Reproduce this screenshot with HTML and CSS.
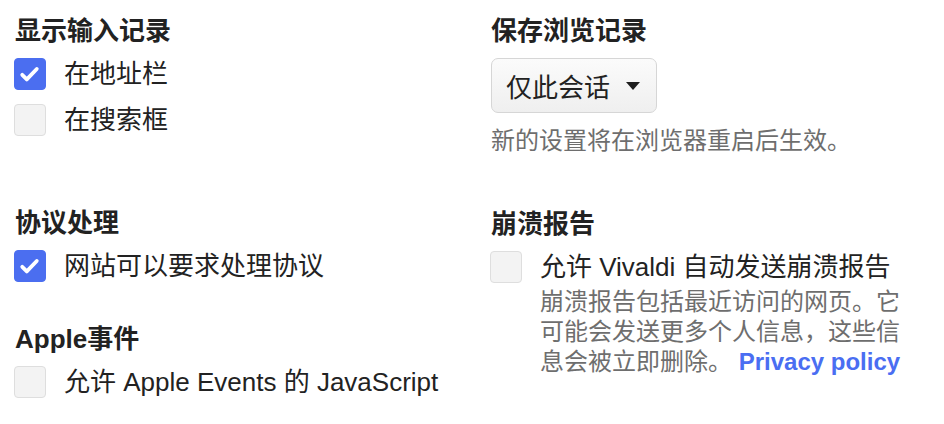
FILE: index.html
```html
<!DOCTYPE html>
<html lang="zh-CN">
<head>
<meta charset="utf-8">
<link rel="stylesheet" href="styles.css">
</head>
<body>
<div class="page">
  <div class="col">
    <section class="group">
      <h2 class="title">显示输入记录</h2>
      <label class="row"><span class="box checked"><svg viewBox="0 0 32 32"><path d="M8 17.5 L13 22.5 L24 11" /></svg></span><span class="text">在地址栏</span></label>
      <label class="row"><span class="box"></span><span class="text">在搜索框</span></label>
    </section>
    <section class="group g2">
      <h2 class="title">协议处理</h2>
      <label class="row"><span class="box checked"><svg viewBox="0 0 32 32"><path d="M8 17.5 L13 22.5 L24 11" /></svg></span><span class="text">网站可以要求处理协议</span></label>
    </section>
    <section class="group g3">
      <h2 class="title">Apple事件</h2>
      <label class="row"><span class="box"></span><span class="text">允许 Apple Events 的 JavaScript</span></label>
    </section>
  </div>
  <div class="col">
    <section class="group">
      <h2 class="title">保存浏览记录</h2>
      <div class="select"><span>仅此会话</span><span class="caret"></span></div>
      <p class="hint">新的设置将在浏览器重启后生效。</p>
    </section>
    <section class="group g2r">
      <h2 class="title">崩溃报告</h2>
      <div class="row top">
        <span class="box"></span>
        <div class="stack">
          <span class="text">允许 Vivaldi 自动发送崩溃报告</span>
          <p class="desc">崩溃报告包括最近访问的网页。它可能会发送更多个人信息，这些信息会被立即删除。 <a class="link" href="#">Privacy policy</a></p>
        </div>
      </div>
    </section>
  </div>
</div>
</body>
</html>
```
FILE: styles.css
```css
html, body {
  margin: 0;
  padding: 0;
  background: #ffffff;
}
body {
  font-family: "Liberation Sans", "Noto Sans CJK SC", sans-serif;
  color: #222222;
}
.page {
  display: grid;
  grid-template-columns: 476px 1fr;
  padding: 15px 0 0 14px;
}
.col {
  display: flex;
  flex-direction: column;
}
.group {
  display: flex;
  flex-direction: column;
}
.title {
  margin: 0 0 11px 1px;
  font-size: 26px;
  line-height: 32px;
  font-weight: bold;
  color: #222222;
}
.g2 { margin-top: 57px; }
.g3 { margin-top: 27px; }
.g2r { margin-top: 52px; }
.row {
  display: flex;
  align-items: center;
  gap: 18px;
  height: 32px;
  margin-bottom: 14px;
}
.row.top {
  align-items: flex-start;
  height: auto;
}
.box {
  flex: none;
  width: 32px;
  height: 32px;
  box-sizing: border-box;
  border-radius: 4px;
  background: #f3f3f3;
  border: 1.5px solid #dedede;
}
.box.checked {
  background: #4b6ef0;
  border-color: #4b6ef0;
}
.box svg {
  display: block;
  width: 29px;
  height: 29px;
}
.box svg path {
  fill: none;
  stroke: #ffffff;
  stroke-width: 4.2;
  stroke-linecap: round;
  stroke-linejoin: round;
}
.text {
  font-size: 26px;
  line-height: 32px;
  color: #222222;
}
.stack {
  display: flex;
  flex-direction: column;
}
.desc {
  margin: 4px 0 0 0;
  width: 372px;
  font-size: 24px;
  line-height: 30px;
  color: #6e6e6e;
}
.link {
  color: #4a6ef2;
  font-weight: bold;
  text-decoration: none;
  white-space: nowrap;
}
.select {
  align-self: flex-start;
  display: flex;
  align-items: center;
  gap: 16px;
  box-sizing: border-box;
  width: 166px;
  height: 55px;
  margin-left: 1px;
  padding: 0 0 0 14px;
  border: 1.5px solid #d6d6d6;
  border-radius: 7px;
  background: linear-gradient(#fbfbfb, #efefef);
  font-size: 26px;
  color: #222222;
}
.caret {
  width: 0;
  height: 0;
  border-left: 7px solid transparent;
  border-right: 7px solid transparent;
  border-top: 8px solid #1e1e1e;
}
.hint {
  margin: 13px 0 0 1px;
  font-size: 24px;
  line-height: 30px;
  color: #6e6e6e;
}
```
